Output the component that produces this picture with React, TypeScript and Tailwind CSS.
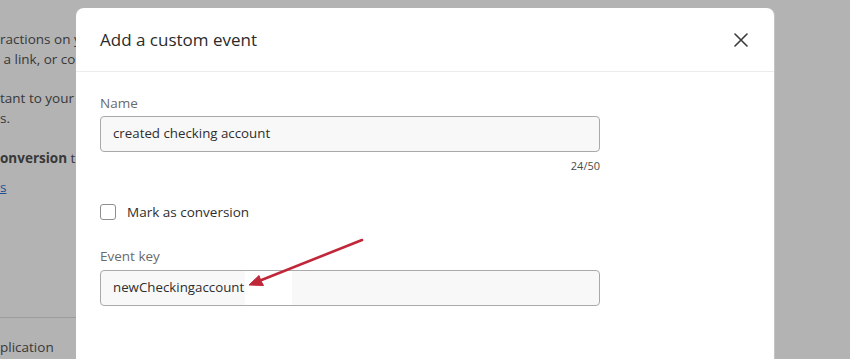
import React from 'react';

const FONT = { fontFamily: '"Open Sans", "Noto Sans", sans-serif' };

export default function App() {
  return (
    <div
      className="relative flex w-[850px] h-[359px] overflow-hidden bg-[#b3b3b3]"
      style={FONT}
    >
      {/* Page behind the overlay */}
      <div className="w-[76px] shrink-0 overflow-hidden text-[13.5px] leading-[20px] text-[#383838]">
        <div className="pt-[29px] whitespace-nowrap">
          <p>ractions on your website</p>
          <p>&nbsp;a link, or completing</p>
          <p className="mt-[19px]">tant to your customers</p>
          <p>s.</p>
          <p className="mt-[20px]">
            <span className="font-bold">onversion</span> to
          </p>
          <p className="mt-[9px] text-[#1f4f96] underline">s</p>
        </div>
        <div className="mt-[120px] h-px w-full bg-[#9c9c9c]" />
        <p className="mt-[19px] whitespace-nowrap">plication</p>
      </div>

      {/* Modal */}
      <div className="mt-[8px] w-[699px] shrink-0 rounded-t-[8px] bg-white border-r border-[#c4c4c4]">
        <div className="flex h-[64px] items-center justify-between border-b border-[#ececec] pl-[24px] pr-[26px]">
          <h2 className="text-[17px] text-[#2b2b2b]">Add a custom event</h2>
          <svg width="14" height="14" viewBox="0 0 14 14" className="text-[#3a3a3a]">
            <path d="M1 1L13 13M13 1L1 13" stroke="currentColor" strokeWidth="1.6" strokeLinecap="round" />
          </svg>
        </div>

        <div className="pl-[24px] pt-[21px]">
          <label className="block text-[13.5px] leading-[20px] text-[#6a6a6a]">Name</label>
          <div className="mt-[3px] flex h-[36px] w-[500px] items-center rounded-[4px] border border-[#a9a9a9] bg-[#f8f8f8] px-[12px] text-[13.3px] text-[#2e2e2e]">
            created checking account
          </div>
          <div className="mt-[6px] w-[500px] text-right text-[11px] leading-[16px] text-[#4a4a4a]">24/50</div>

          <div className="mt-[28px] flex h-[20px] items-center gap-[11px]">
            <span className="h-[16px] w-[16px] rounded-[3px] border border-[#8f8f8f] bg-white" />
            <span className="text-[13.5px] text-[#2e2e2e]">Mark as conversion</span>
          </div>

          <label className="mt-[24px] block text-[13.5px] leading-[20px] text-[#6a6a6a]">Event key</label>
          <div className="mt-[4px] flex h-[36px] w-[500px] items-center rounded-[4px] border border-[#a9a9a9] bg-[#f8f8f8] pl-[12px] text-[13.3px] text-[#2e2e2e]">
            <span>newCheckingaccount</span>
            <span className="ml-[1px] h-[34px] w-[47px] bg-white" />
          </div>
        </div>
      </div>

      {/* Annotation arrow */}
      <svg className="pointer-events-none absolute left-0 top-0" width="850" height="359">
        <line x1="362" y1="240" x2="259" y2="281" stroke="#c0283a" strokeWidth="2.6" strokeLinecap="round" />
        <path d="M249 285 L259 275.5 L261 281 L263.5 285.5 Z" fill="#c0283a" stroke="#c0283a" strokeWidth="1" strokeLinejoin="round" />
      </svg>
    </div>
  );
}
